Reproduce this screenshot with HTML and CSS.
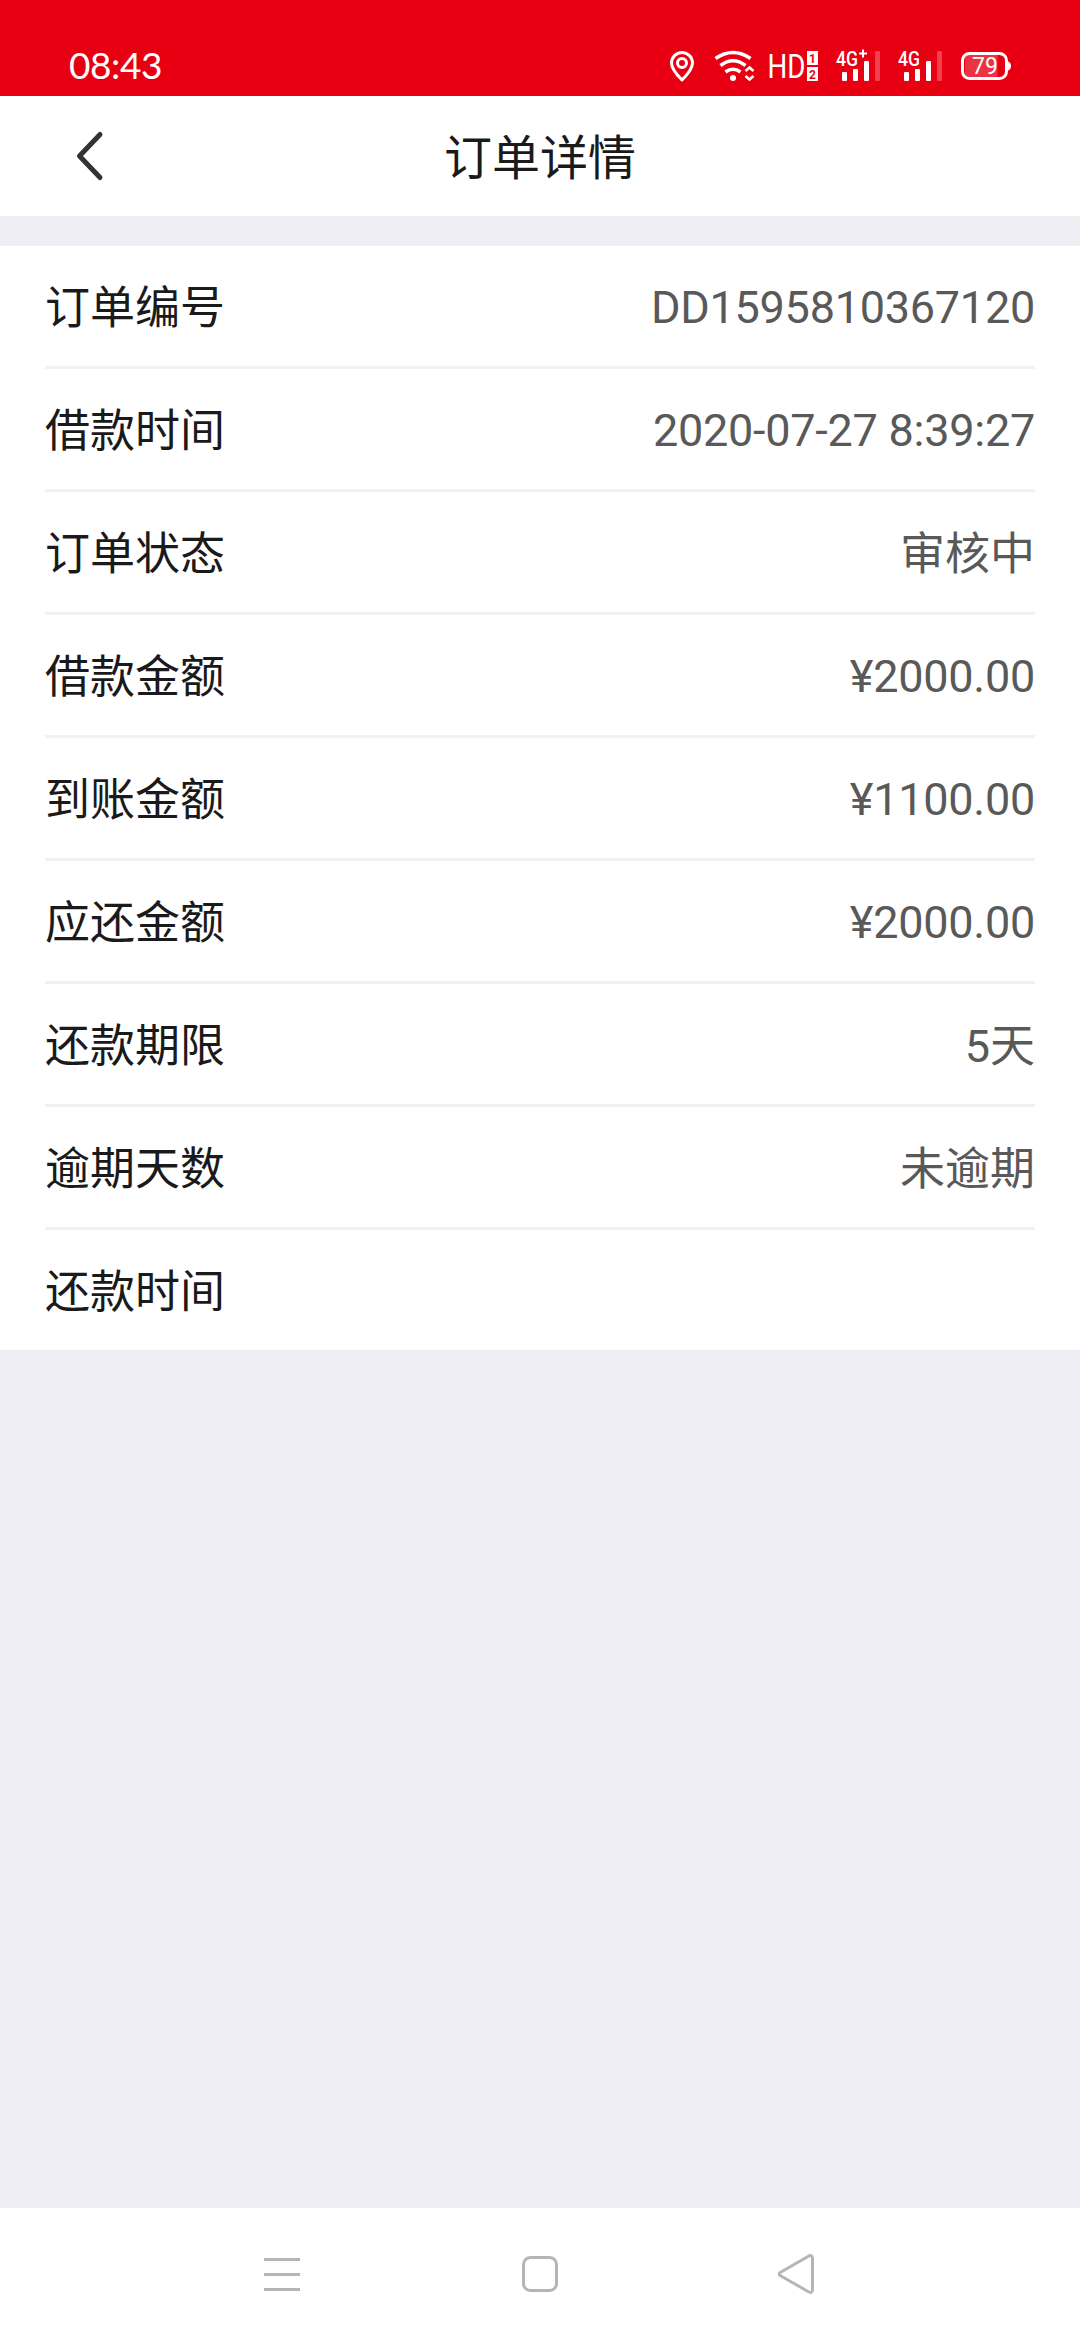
FILE: index.html
```html
<!DOCTYPE html>
<html lang="zh-CN">
<head>
    <meta charset="UTF-8">
    <meta name="viewport" content="width=device-width, initial-scale=1.0">
    <title>订单详情</title>
    <link rel="stylesheet" href="styles.css">
</head>
<body>
    <!-- 状态栏 -->
    <div class="status-bar">
        <span class="time">08:43</span>
        <svg class="status-icons" width="350" height="40" viewBox="670 45 350 40" fill="none" stroke="#fff">
            <path d="M682 80C675 73 671.500 68 671.500 63A10.500 10.500 0 0 1 692.500 63C692.500 68 689 73 682 80Z" stroke-width="3" stroke-linejoin="round"/>
            <circle cx="682" cy="63" r="4.500" stroke-width="3"/>
            <path d="M715.500 58.500Q733 46.500 750.500 58.500M720.500 65.500Q733 56 745.500 65.500M725.500 72Q733 66.500 740.500 72" stroke-width="3.600"/>
            <circle cx="733" cy="78" r="3" fill="#fff" stroke="none"/>
            <path d="M745.500 71L749.500 67.500L753.500 71M745.500 76L749.500 79.500L753.500 76" stroke-width="2.600"/>
            <text class="hd" x="767.500" y="78" textLength="38" lengthAdjust="spacingAndGlyphs">HD</text>
            <rect x="807" y="51" width="11" height="14" fill="#fff" stroke="none"/>
            <rect x="807" y="67" width="11" height="14" fill="#fff" stroke="none"/>
            <text class="sim" x="812.500" y="62.500">1</text>
            <text class="sim" x="812.500" y="78.500">2</text>
            <text class="net" x="836" y="66" textLength="22" lengthAdjust="spacingAndGlyphs">4G</text>
            <path d="M859 53.500H867M863 49.500V57.500" stroke-width="2"/>
            <g fill="#fff" stroke="none">
                <rect x="842" y="72" width="5" height="9" rx="1"/>
                <rect x="853" y="69" width="5" height="12" rx="1"/>
                <rect x="864" y="61" width="5" height="20" rx="1"/>
                <rect x="875" y="51" width="5" height="30" rx="1" opacity=".25"/>
                <rect x="904" y="72" width="5" height="9" rx="1"/>
                <rect x="915" y="69" width="5" height="12" rx="1"/>
                <rect x="926" y="61" width="5" height="20" rx="1"/>
                <rect x="937" y="51" width="5" height="30" rx="1" opacity=".25"/>
                <rect x="965" y="55" width="32.500" height="22" opacity=".2"/>
                <path d="M1007 61Q1011 62 1011 66Q1011 70 1007 71Z"/>
            </g>
            <text class="net" x="898" y="66" textLength="22" lengthAdjust="spacingAndGlyphs">4G</text>
            <rect x="962.500" y="53.500" width="44" height="25" rx="7" stroke-width="3"/>
            <text class="level" x="985" y="73.500">79</text>
        </svg>
    </div>

    <div class="header">
        <svg class="back" width="30" height="52" viewBox="0 0 30 52">
            <path d="M25 4.500L4.500 26L25 47.500"/>
        </svg>
        <h1>订单详情</h1>
    </div>

    <!-- 订单信息 -->
    <div class="order-list">
        <div class="row"><span>订单编号</span><span class="value number">DD1595810367120</span></div>
        <div class="row"><span>借款时间</span><span class="value number">2020-07-27 8:39:27</span></div>
        <div class="row"><span>订单状态</span><span class="value">审核中</span></div>
        <div class="row"><span>借款金额</span><span class="value number">¥2000.00</span></div>
        <div class="row"><span>到账金额</span><span class="value number">¥1100.00</span></div>
        <div class="row"><span>应还金额</span><span class="value number">¥2000.00</span></div>
        <div class="row"><span>还款期限</span><span class="value">5天</span></div>
        <div class="row"><span>逾期天数</span><span class="value">未逾期</span></div>
        <div class="row"><span>还款时间</span><span class="value"></span></div>
    </div>

    <!-- 底部导航 -->
    <div class="nav-bar">
        <svg width="40" height="40" viewBox="0 0 40 40"><path d="M2 5.500H38M2 20.500H38M2 35.500H38"/></svg>
        <svg width="40" height="40" viewBox="0 0 40 40"><rect x="3.500" y="3.500" width="33" height="33" rx="7"/></svg>
        <svg width="40" height="40" viewBox="0 0 40 40"><path d="M3 18L30 2.500Q34.500 0 34.500 4.500V35.500Q34.500 40 30 37.500L3 22Q-1 20 3 18Z"/></svg>
    </div>
</body>
</html>
```

FILE: styles.css
```css
* {
    box-sizing: border-box;
}
body {
    margin: 0;
    height: 2340px;
    font-family: Roboto, "Noto Sans CJK SC", sans-serif;
    background-color: #efeef4;
    color: #1a1a1a;
    display: flex;
    flex-direction: column;
    overflow: hidden;
}
.status-bar {
    height: 96px;
    padding: 45px 60px 0 69px;
    background-color: #e80012;
    color: #fff;
    display: flex;
    justify-content: space-between;
}
.time {
    font-family: Lato, sans-serif;
    font-size: 37px;
    line-height: 40px;
    letter-spacing: -0.4px;
}
.status-icons text {
    fill: #fff;
    stroke: none;
}
.status-icons .hd {
    font-family: Roboto, sans-serif;
    font-size: 33px;
}
.status-icons .sim {
    fill: #e80012;
    font-family: Roboto, sans-serif;
    font-size: 12px;
    font-weight: 700;
    text-anchor: middle;
}
.status-icons .net {
    font-family: Roboto, sans-serif;
    font-size: 20px;
    font-weight: 500;
}
.status-icons .level {
    font-family: Roboto, sans-serif;
    font-size: 23px;
    text-anchor: middle;
}
.header {
    height: 120px;
    background-color: #fff;
    display: grid;
    grid-template-columns: 180px 1fr 180px;
    align-items: center;
}
.header h1 {
    margin: 0;
    padding-bottom: 4px;
    font-size: 48px;
    font-weight: 400;
    text-align: center;
}
.back {
    margin-left: 75px;
    fill: none;
    stroke: #333;
    stroke-width: 5;
    stroke-linecap: round;
    stroke-linejoin: round;
}
.order-list {
    margin-top: 30px;
    padding: 0 45px;
    background-color: #fff;
}
.row {
    height: 123px;
    padding-bottom: 4px;
    border-bottom: 3px solid #f2f2f2;
    display: flex;
    justify-content: space-between;
    align-items: center;
    font-size: 45px;
}
.row:last-child {
    height: 120px;
    border-bottom: none;
}
.value {
    color: #595959;
}
.number {
    padding-top: 6px;
    letter-spacing: -0.25px;
}
.nav-bar {
    height: 132px;
    margin-top: auto;
    padding: 0 262px;
    background-color: #fff;
    display: flex;
    justify-content: space-between;
    align-items: center;
}
.nav-bar svg {
    fill: none;
    stroke: #b5b5b5;
    stroke-width: 3;
}
```
